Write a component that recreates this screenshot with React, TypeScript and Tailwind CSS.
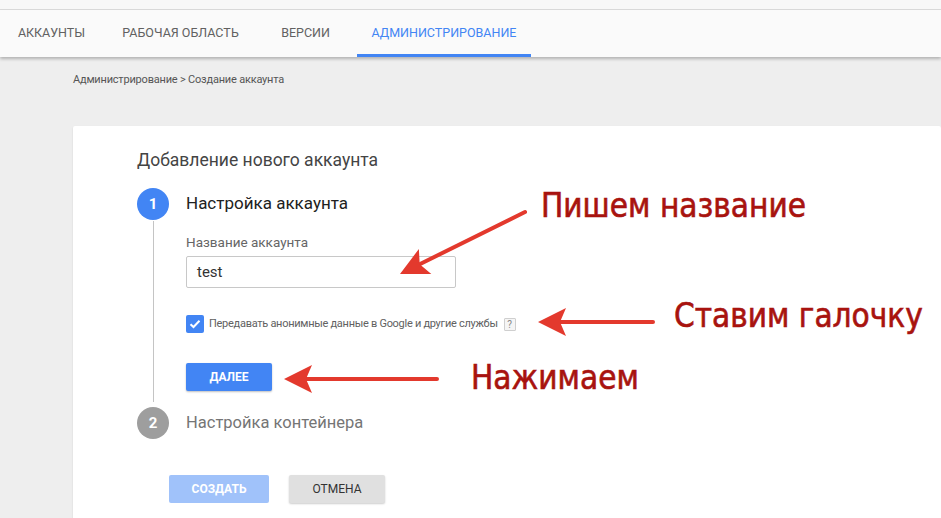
import React from 'react';

const RED = '#e3392d';

const Arrow: React.FC<{ from: [number, number]; tip: [number, number] }> = ({ from, tip }) => {
  const dx = from[0] - tip[0];
  const dy = from[1] - tip[1];
  const len = Math.sqrt(dx * dx + dy * dy);
  const angle = (Math.atan2(dy, dx) * 180) / Math.PI;
  // drawn pointing left from the tip, then rotated onto the line
  return (
    <g transform={`translate(${tip[0]} ${tip[1]}) rotate(${angle})`}>
      <line x1={18} y1={0} x2={len} y2={0} stroke={RED} strokeWidth={4} strokeLinecap="round" />
      <polygon points="0,0 28,-14 22,0 28,14" fill={RED} />
    </g>
  );
};

const Annotation: React.FC<{ children: React.ReactNode; className: string }> = ({ children, className }) => (
  <span
    className={`absolute whitespace-nowrap font-['DejaVu_Sans_Condensed','DejaVu_Sans',sans-serif] text-[33px] leading-none text-[#a8130f] [-webkit-text-stroke:0.6px_#a8130f] [text-shadow:0_0_6px_#fff,0_0_10px_#fff] ${className}`}
  >
    {children}
  </span>
);

export default function App() {
  return (
    <div className="relative w-[941px] h-[518px] overflow-hidden bg-[#eeeeee] font-['Roboto',sans-serif]">
      <div className="h-[10px] bg-[#f8f8f8] border-b border-[#dcdcdc]" />
      <nav className="relative z-10 h-[47px] bg-[#fafafa] shadow-[0_2px_3px_rgba(0,0,0,0.25)] flex items-stretch text-[12.5px] text-[#616161]">
        <div className="w-[103px] flex items-center justify-center">АККАУНТЫ</div>
        <div className="w-[155px] flex items-center justify-center">РАБОЧАЯ ОБЛАСТЬ</div>
        <div className="w-[95px] flex items-center justify-center">ВЕРСИИ</div>
        <div className="ml-[4px] w-[174px] flex items-center justify-center text-[#4285f4] border-b-[3px] border-[#4285f4] pt-[3px]">
          АДМИНИСТРИРОВАНИЕ
        </div>
      </nav>

      <div className="pl-[73px] pt-[15px] text-[11px] tracking-[-0.2px] leading-[16px] text-[#555]">
        Администрирование &gt; Создание аккаунта
      </div>

      <div className="ml-[73px] mt-[38px] bg-white rounded-[2px] shadow-[0_1px_2px_rgba(0,0,0,0.12)] pl-[64px] pt-[23px] h-[500px]">
        <div className="text-[17.5px] leading-[22px] text-[#444]">Добавление нового аккаунта</div>

        <div className="mt-[17px] flex">
          <div className="w-[32px] flex flex-col items-center">
            <div className="w-[32px] h-[32px] rounded-full bg-[#4285f4] text-white text-[15px] font-bold flex items-center justify-center">1</div>
            <div className="flex-1 w-px bg-[#c4c4c4] my-[1px] mb-[5px]" />
          </div>
          <div className="ml-[17px] pb-[16px]">
            <div className="h-[32px] flex items-center text-[17px] text-[#212121]">Настройка аккаунта</div>
            <div className="mt-[14px] text-[13.5px] leading-[16px] text-[#666]">Название аккаунта</div>
            <div className="mt-[6px] w-[270px] h-[32px] border border-[#c8c8c8] rounded-[2px] flex items-center px-[10px] text-[15px] text-[#333]">
              test
            </div>
            <div className="mt-[27px] h-[18px] flex items-center">
              <div className="w-[18px] h-[18px] rounded-[2px] bg-[#4285f4] flex items-center justify-center">
                <svg width="12" height="10" viewBox="0 0 12 10">
                  <path d="M1.5 5.2 L4.5 8 L10.5 1.8" fill="none" stroke="#fff" strokeWidth="2" />
                </svg>
              </div>
              <span className="ml-[5px] text-[11px] tracking-[-0.28px] text-[#616161]">
                Передавать анонимные данные в Google и другие службы
              </span>
              <span className="ml-[6px] w-[12px] h-[13px] border border-[#cfcfcf] bg-[#f5f5f5] rounded-[1px] text-[10px] leading-[11px] text-[#888] flex items-center justify-center">
                ?
              </span>
            </div>
            <div className="mt-[30px] w-[86px] h-[28px] rounded-[2px] bg-[#4285f4] shadow-[0_1px_2px_rgba(0,0,0,0.25)] flex items-center justify-center text-white text-[12px] font-bold">
              ДАЛЕЕ
            </div>
          </div>
        </div>

        <div className="flex">
          <div className="w-[32px] h-[32px] rounded-full bg-[#9e9e9e] text-white text-[15px] font-bold flex items-center justify-center">2</div>
          <div className="ml-[17px] h-[32px] flex items-center text-[16.5px] text-[#757575]">Настройка контейнера</div>
        </div>

        <div className="mt-[36px] ml-[32px] flex gap-[20px]">
          <div className="w-[100px] h-[28px] rounded-[2px] bg-[#a0c2fa] flex items-center justify-center text-white text-[12px] font-bold">
            СОЗДАТЬ
          </div>
          <div className="w-[96px] h-[28px] rounded-[2px] bg-[#e0e0e0] shadow-[0_1px_2px_rgba(0,0,0,0.2)] flex items-center justify-center text-[#333] text-[12px]">
            ОТМЕНА
          </div>
        </div>
      </div>

      <svg className="absolute inset-0 pointer-events-none" width="941" height="518">
        <Arrow from={[525, 212]} tip={[400, 274]} />
        <Arrow from={[653, 322]} tip={[538, 322]} />
        <Arrow from={[437, 379]} tip={[284, 379]} />
      </svg>

      <Annotation className="left-[541px] top-[189px]">Пишем название</Annotation>
      <Annotation className="left-[674px] top-[299px]">Ставим галочку</Annotation>
      <Annotation className="left-[471px] top-[361px]">Нажимаем</Annotation>
    </div>
  );
}
